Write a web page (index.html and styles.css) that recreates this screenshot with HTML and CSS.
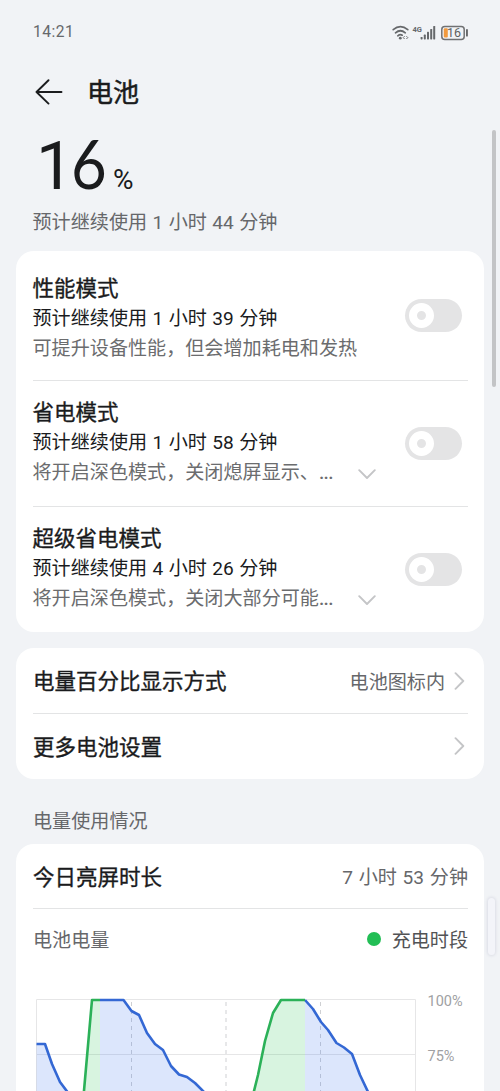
FILE: index.html
```html
<!DOCTYPE html>
<html lang="zh-CN">
<head>
<meta charset="utf-8">
<title>电池</title>
<link rel="stylesheet" href="styles.css">
</head>
<body>
<div class="screen">
  <header class="status">
    <span class="clock">14:21</span>
    <svg class="status-icons" width="78" height="20" viewBox="0 0 78 20" fill="none">
      <g stroke="#66686b" stroke-width="1.7" stroke-linecap="round">
        <path d="M2.2 7.6Q9.4 1.6 16.8 7.6"/>
        <path d="M4.5 10.8Q9.4 6.7 14.3 10.8"/>
        <path d="M6.8 13.8Q9.2 11.9 11.2 13.2"/>
      </g>
      <circle cx="9.3" cy="16.2" r="1.4" fill="#66686b"/>
      <path d="M13.6 14.2L12.2 15.6L13.6 17M15.4 14.2L16.8 15.6L15.4 17" stroke="#66686b" stroke-width="1"/>
      <text x="21.5" y="9.8" class="net">4G</text>
      <g fill="#66686b">
        <rect x="29.6" y="15" width="2" height="2.4" rx=".6"/>
        <rect x="32.8" y="12.6" width="2" height="4.8" rx=".6"/>
        <rect x="36" y="9.8" width="2" height="7.6" rx=".6"/>
        <rect x="39.2" y="7" width="2" height="10.4" rx=".6"/>
        <rect x="42.2" y="4" width="2" height="13.4" rx=".6"/>
      </g>
      <rect x="50.8" y="4.4" width="22.4" height="13" rx="3" stroke="#707173" stroke-width="1.5"/>
      <rect x="52.8" y="6.2" width="4" height="9.4" rx="1" fill="#f19a3e"/>
      <rect x="75" y="7" width="1.9" height="7.6" rx=".9" fill="#66686b"/>
      <text x="56" y="15.2" class="level">16</text>
    </svg>
  </header>

  <div class="titlebar">
    <svg width="28" height="26" viewBox="0 0 28 26" fill="none" stroke="#1b1c1e" stroke-width="1.9" stroke-linecap="round" stroke-linejoin="round">
      <path d="M13.5 1.2L1.5 13L13.5 24.6M1.5 13H26.5"/>
    </svg>
    <h1>电池</h1>
  </div>

  <div class="charge"><span class="one">1</span><span class="six">6</span><span class="pct">%</span></div>
  <p class="remaining">预计继续使用 1 小时 44 分钟</p>

  <section class="card modes">
    <div class="mode first">
      <div class="copy">
        <h2>性能模式</h2>
        <p class="est">预计继续使用 1 小时 39 分钟</p>
        <p class="desc">可提升设备性能，但会增加耗电和发热</p>
      </div>
      <span class="toggle"><i></i></span>
    </div>
    <div class="mode">
      <div class="copy">
        <h2>省电模式</h2>
        <p class="est">预计继续使用 1 小时 58 分钟</p>
        <p class="desc"><span>将开启深色模式，关闭熄屏显示、<b>...</b></span><svg class="down" width="18" height="11" viewBox="0 0 18 11"><path d="M1.2 1.2L9 9L16.8 1.2"/></svg></p>
      </div>
      <span class="toggle"><i></i></span>
    </div>
    <div class="mode">
      <div class="copy">
        <h2>超级省电模式</h2>
        <p class="est">预计继续使用 4 小时 26 分钟</p>
        <p class="desc"><span>将开启深色模式，关闭大部分可能<b>...</b></span><svg class="down" width="18" height="11" viewBox="0 0 18 11"><path d="M1.2 1.2L9 9L16.8 1.2"/></svg></p>
      </div>
      <span class="toggle"><i></i></span>
    </div>
  </section>

  <section class="card links">
    <div class="link">
      <h2>电量百分比显示方式</h2>
      <span class="value">电池图标内</span>
      <svg class="next" width="11" height="18" viewBox="0 0 11 18"><path d="M1.5 1.2L9.3 9L1.5 16.8"/></svg>
    </div>
    <div class="link">
      <h2>更多电池设置</h2>
      <svg class="next" width="11" height="18" viewBox="0 0 11 18"><path d="M1.5 1.2L9.3 9L1.5 16.8"/></svg>
    </div>
  </section>

  <h3 class="section-label">电量使用情况</h3>

  <section class="card usage">
    <div class="today">
      <h2>今日亮屏时长</h2>
      <span class="value">7 小时 53 分钟</span>
    </div>
    <div class="legend">
      <span class="value">电池电量</span>
      <span class="key"><i></i>充电时段</span>
    </div>
    <svg class="chart" width="435" height="111" viewBox="33 980 435 111">
      <g fill="none" stroke="#e6e6e7" stroke-width="1">
        <path d="M36.5 1091V999.5H415.5V1091M36.5 1054.5H415.5"/>
      </g>
      <g stroke="#cfd0d3" stroke-width="1" stroke-dasharray="4 4">
        <path d="M131.5 1002V1091M226 1002V1091M320.5 1002V1091"/>
      </g>
      <g fill="#3b76ec" fill-opacity=".18">
        <path d="M36.5 1044H45L52 1064L60 1082L67 1091H36.5Z"/>
        <path d="M100 1000H123.5L131.5 1011L139 1015L147 1033L155 1044L163 1050L171 1066L179 1074.5L187 1077L195 1083L203 1091H100Z"/>
        <path d="M305 1000L313 1009L321 1022L328 1030L336.5 1043L344 1047.5L352 1054L360 1075L368 1091H305Z"/>
      </g>
      <g fill="#2fc45a" fill-opacity=".19">
        <path d="M84 1091L92 1000H100V1091Z"/>
        <path d="M254 1091L258 1075L265 1041L273 1013L281 1000H305V1091Z"/>
      </g>
      <g fill="none" stroke="#3468d4" stroke-width="2.6" stroke-linejoin="round">
        <path d="M36.5 1044H45L52 1064L60 1082L69 1094"/>
        <path d="M100 1000H123.5L131.5 1011L139 1015L147 1033L155 1044L163 1050L171 1066L179 1074.5L187 1077L195 1083L205 1093"/>
        <path d="M305 1000L313 1009L321 1022L328 1030L336.5 1043L344 1047.5L352 1054L360 1075L369 1094"/>
      </g>
      <g fill="none" stroke="#2bb158" stroke-width="2.6" stroke-linejoin="round">
        <path d="M83.8 1093L92 1000H100"/>
        <path d="M253.5 1093L258 1075L265 1041L273 1013L281 1000H305"/>
      </g>
      <text x="427.5" y="1005.5" class="axis">100%</text>
      <text x="427.5" y="1060.5" class="axis">75%</text>
    </svg>
  </section>

  <div class="scrollbar"></div>
  <div class="edge-handle"></div>
</div>
</body>
</html>
```
FILE: styles.css
```css
* { box-sizing: border-box; }
body, h1, h2, h3, p { margin: 0; }
h1, h2, h3 { font-weight: 400; }

.screen {
  position: relative;
  width: 500px;
  height: 1091px;
  overflow: hidden;
  padding: 0 16px;
  background: #f1f3f6;
  color: #1a1b1d;
  font-family: Roboto, "Noto Sans CJK SC", sans-serif;
  font-size: 19.1px;
}

.status {
  height: 63px;
  padding: 0 15px 0 17px;
  display: flex;
  align-items: center;
  justify-content: space-between;
}
.clock { font-size: 15.6px; letter-spacing: .5px; color: #66686b; }
.net { font: 700 7.5px Roboto, sans-serif; fill: #66686b; }
.level { font: 400 12.5px Roboto, sans-serif; fill: #5e5f61; }

.titlebar {
  height: 57px;
  padding-left: 19px;
  display: flex;
  align-items: center;
  gap: 24px;
}
h1 { padding-top: 2px; font-size: 26px; line-height: 38px; -webkit-text-stroke: .5px #1a1b1d; }

.charge {
  height: 84px;
  padding-left: 20px;
  display: flex;
  align-items: baseline;
  line-height: 86px;
}
.one { width: 35px; font-size: 67px; }
.six {
  width: 42px;
  font-family: Lato, sans-serif;
  font-size: 67px;
  transform: scaleX(.92);
  transform-origin: left;
}
.pct { font-size: 28px; }

.remaining {
  height: 47px;
  padding: 1px 0 0 16.5px;
  line-height: 36px;
  color: #66676a;
  word-spacing: .7px;
}

.card { background: #fff; border-radius: 18px; padding: 0 16px 0 17px; }
h2 { font-size: 21.5px; line-height: 31px; white-space: nowrap; -webkit-text-stroke: .35px #1a1b1d; }

.modes { height: 381px; }
.mode {
  height: 126px;
  display: flex;
  justify-content: space-between;
  padding-top: 16px;
}
.mode + .mode, .link + .link { border-top: 1px solid #e3e4e5; }
.mode.first { height: 129px; padding-top: 22px; }
.copy { width: 343px; margin-left: -.5px; }
.est { line-height: 30px; word-spacing: .7px; }
.desc {
  display: flex;
  align-items: center;
  justify-content: space-between;
  line-height: 29px;
  color: #6b6c6e;
  white-space: nowrap;
}
.desc b { font-weight: 500; letter-spacing: -.6px; }
.down, .next { fill: none; stroke: #c4c5c7; stroke-width: 1.9; stroke-linecap: round; stroke-linejoin: round; }
.down { margin-top: 4px; }

.toggle {
  width: 57px;
  height: 33px;
  margin: 30px 6px 0 0;
  padding: 4px;
  border-radius: 17px;
  background: #e4e4e5;
}
.first .toggle { margin-top: 26px; }
.toggle i {
  display: block;
  width: 25px;
  height: 25px;
  border: 8.5px solid #fff;
  border-radius: 50%;
  background: #e4e4e5;
}

.links { height: 131px; margin-top: 16px; }
.link { height: 65px; display: flex; align-items: center; padding-right: 3px; }
.link h2 { flex: 1; padding-top: 2px; }
.value { color: #66676a; word-spacing: 1px; }
.next { margin-left: 9px; }

.section-label {
  height: 65px;
  padding: 25px 17px 0;
  font-size: 19.1px;
  line-height: 36px;
  color: #66676a;
}

.usage { height: 300px; }
.today {
  height: 65px;
  display: flex;
  align-items: center;
  justify-content: space-between;
  border-bottom: 1px solid #e3e4e5;
}
.today h2 { padding-top: 2px; }
.legend { height: 59px; display: flex; align-items: center; justify-content: space-between; }
.key { display: flex; align-items: center; gap: 11px; color: #525355; }
.key i { width: 14px; height: 14px; border-radius: 50%; background: #22be55; }
.chart { display: block; margin-top: 12px; }
.axis { font: 400 14.5px Roboto, sans-serif; fill: #a0a1a3; }

.scrollbar {
  position: absolute;
  left: 492px;
  top: 130px;
  width: 4px;
  height: 257px;
  border-radius: 2px;
  background: #c3c4c6;
}
.edge-handle {
  position: absolute;
  left: 488px;
  top: 898px;
  width: 7px;
  height: 57px;
  border-radius: 4px;
  background: #f3f4f9;
  box-shadow: 0 0 3px 1px #dcdee6;
}
```
